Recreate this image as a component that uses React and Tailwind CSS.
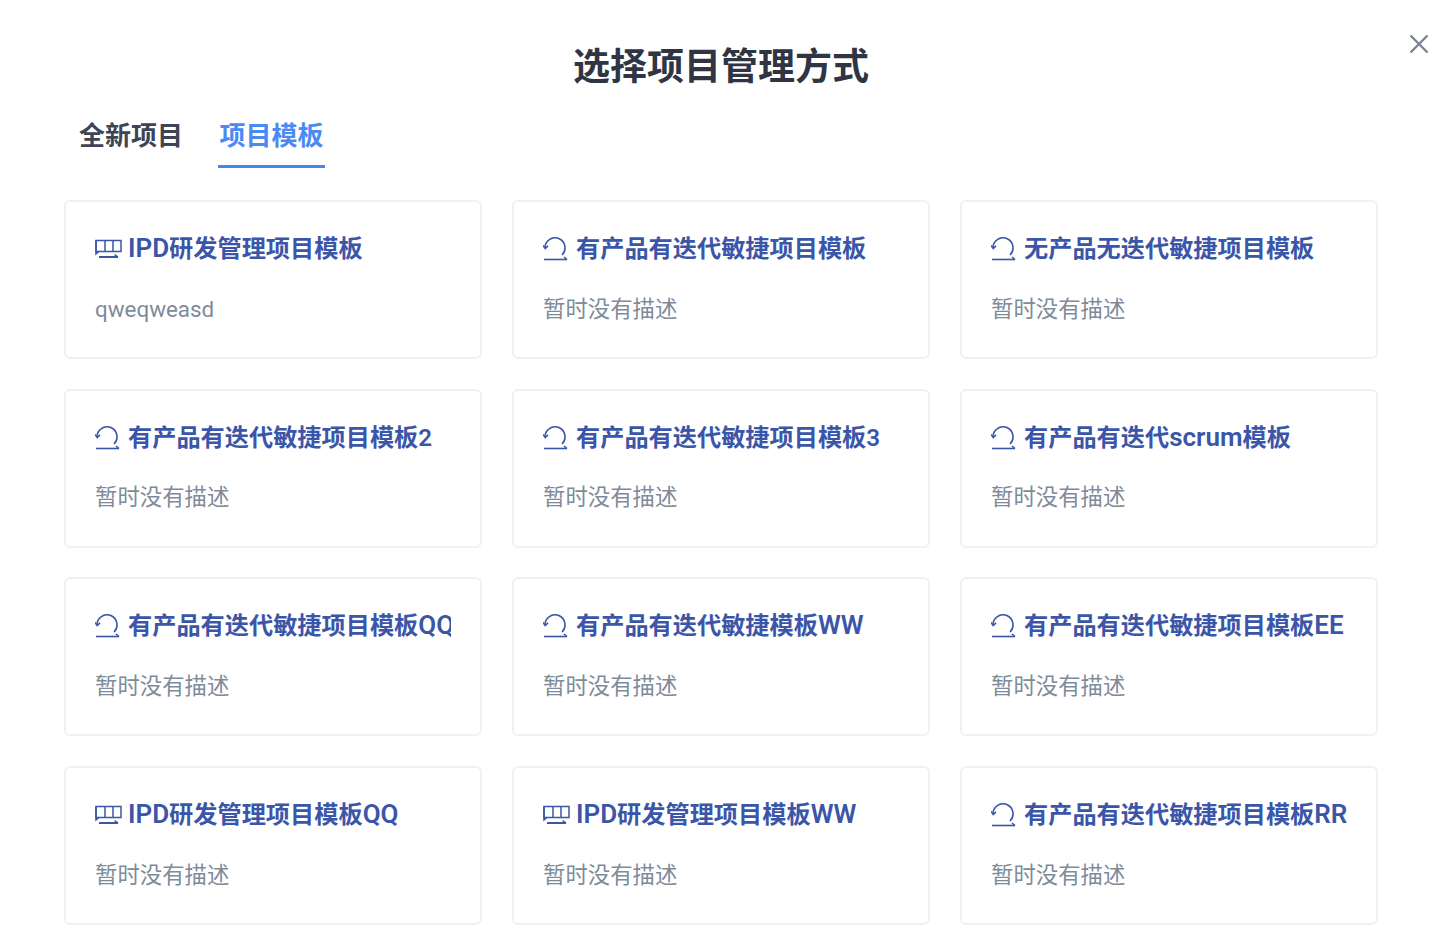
import React from "react";

const templates = [
  { type: "ipd", title: "IPD研发管理项目模板", desc: "qweqweasd" },
  { type: "loop", title: "有产品有迭代敏捷项目模板" },
  { type: "loop", title: "无产品无迭代敏捷项目模板" },
  { type: "loop", title: "有产品有迭代敏捷项目模板2" },
  { type: "loop", title: "有产品有迭代敏捷项目模板3" },
  { type: "loop", title: "有产品有迭代scrum模板" },
  { type: "loop", title: "有产品有迭代敏捷项目模板QQ" },
  { type: "loop", title: "有产品有迭代敏捷模板WW" },
  { type: "loop", title: "有产品有迭代敏捷项目模板EE" },
  { type: "ipd", title: "IPD研发管理项目模板QQ" },
  { type: "ipd", title: "IPD研发管理项目模板WW" },
  { type: "loop", title: "有产品有迭代敏捷项目模板RR" },
];

function IpdIcon() {
  return (
    <svg width="28" height="24" viewBox="0 0 28 24" fill="none" stroke="currentColor" strokeWidth="1.5" className="shrink-0">
      <path d="M1 3.5h25v11H4L1 17z" />
      <path d="M1 3.5v11h3 M10 3.5v11 M18 3.5v11" />
      <path d="M4 20h19" strokeWidth="2" />
      <path d="M19.5 17.5l3.5 2.5" />
    </svg>
  );
}

function LoopIcon() {
  return (
    <svg width="28" height="24" viewBox="0 0 28 24" fill="none" stroke="currentColor" strokeWidth="1.6" className="shrink-0">
      <path d="M2 11A10 10 0 1 1 19 18" />
      <path d="M0 8.5l2.2 3 2.8-2.6" />
      <path d="M1 22.5h23" />
      <path d="M21 20l3 2.5" />
    </svg>
  );
}

// latin letters run a little wider than the CJK size in the design
function Title({ text }) {
  return (
    <span className="ml-[5px] text-[24.2px] font-semibold leading-none">
      {text.split(/([A-Za-z]+)/).map((part, i) =>
        i % 2 ? (
          <span key={i} className="text-[26px] leading-[0]">
            {part}
          </span>
        ) : (
          part
        )
      )}
    </span>
  );
}

function Card({ item }) {
  return (
    <div className="h-[159px] rounded-[6px] border-2 border-[#f0f1f6] bg-white px-[29px] pt-[29px]">
      <div className="flex h-[36px] items-center overflow-hidden whitespace-nowrap text-[#3b56a8]">
        {item.type === "ipd" ? <IpdIcon /> : <LoopIcon />}
        <Title text={item.title} />
      </div>
      <p className="mt-[23.5px] text-[22.4px] leading-[36px] text-[#808b9a]">
        {item.desc || "暂时没有描述"}
      </p>
    </div>
  );
}

export default function App() {
  return (
    <div className="relative h-[949px] w-[1442px] overflow-hidden bg-white font-['Roboto','Noto_Sans_CJK_SC',sans-serif]">
      <button className="absolute right-[11px] top-[32px] text-[#7b8494]">
        <svg width="24" height="24" viewBox="0 0 24 24" fill="none" stroke="currentColor" strokeWidth="2.4">
          <path d="M3.5 3.5l17 17M20.5 3.5l-17 17" />
        </svg>
      </button>

      <h1 className="pt-[42px] text-center text-[37px] font-bold leading-[52px] text-[#2f3542]">
        选择项目管理方式
      </h1>

      <div className="mt-[14px] flex pl-[64px]">
        <div className="flex h-[60px] items-start px-[15px] pt-[10px] text-[26px] font-semibold leading-[36px] text-[#3d4454]">
          全新项目
        </div>
        <div className="ml-[20px] flex h-[60px] items-start border-b-[3px] border-[#3f86f7] px-[1.5px] pt-[10px] text-[26px] font-semibold leading-[36px] text-[#4a8af4]">
          项目模板
        </div>
      </div>

      <div className="mt-[32px] grid grid-cols-3 gap-x-[30px] gap-y-[29.7px] px-[64px]">
        {templates.map((item) => (
          <Card key={item.title} item={item} />
        ))}
      </div>
    </div>
  );
}
